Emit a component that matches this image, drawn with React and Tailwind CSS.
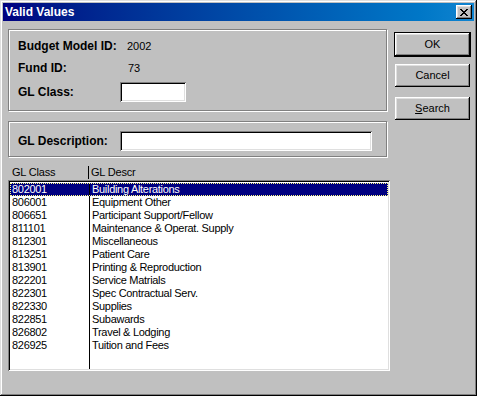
import React from 'react';

const rows = [
  ['802001', 'Building Alterations'],
  ['806001', 'Equipment Other'],
  ['806651', 'Participant Support/Fellow'],
  ['811101', 'Maintenance & Operat. Supply'],
  ['812301', 'Miscellaneous'],
  ['813251', 'Patient Care'],
  ['813901', 'Printing & Reproduction'],
  ['822201', 'Service Matrials'],
  ['822301', 'Spec Contractual Serv.'],
  ['822330', 'Supplies'],
  ['822851', 'Subawards'],
  ['826802', 'Travel & Lodging'],
  ['826925', 'Tuition and Fees'],
];

const raised =
  'bg-[#c0c0c0] shadow-[inset_-1px_-1px_#000,inset_1px_1px_#fff,inset_-2px_-2px_#808080,inset_2px_2px_#dfdfdf]';
const sunken =
  'shadow-[inset_1px_1px_#808080,inset_-1px_-1px_#fff,inset_2px_2px_#000,inset_-2px_-2px_#dfdfdf]';
const etched = 'border border-[#808080] shadow-[1px_1px_0_#fff,inset_1px_1px_0_#fff]';

const App = () => {
  return (
    <div className="w-[477px] h-[396px] bg-[#c0c0c0] p-[3px] text-black font-['Liberation_Sans',Arial,sans-serif] shadow-[inset_-1px_-1px_#000,inset_1px_1px_#dfdfdf,inset_-2px_-2px_#808080,inset_2px_2px_#fff]">
      {/* Title bar */}
      <div className="h-[18px] flex items-center justify-between pl-[2px] pr-[2px] bg-gradient-to-r from-[#000080] to-[#1084d0]">
        <span className="text-white font-bold text-[12px] leading-none">Valid Values</span>
        <div className={`w-[16px] h-[14px] flex items-center justify-center ${raised}`}>
          <svg width="8" height="7" viewBox="0 0 8 7" shapeRendering="crispEdges">
            <path
              fill="#000"
              d="M0 0h2v1h-2zM6 0h2v1h-2zM1 1h2v1h-2zM5 1h2v1h-2zM2 2h4v1h-4zM3 3h2v1h-2zM2 4h4v1h-4zM1 5h2v1h-2zM5 5h2v1h-2zM0 6h2v1h-2zM6 6h2v1h-2z"
            />
          </svg>
        </div>
      </div>

      <div className="flex pl-[5px]">
        {/* Left column */}
        <div className="w-[382px] pt-[8px]">
          <div className={`w-[379px] h-[82px] pl-[9px] pt-[8px] flex flex-col ${etched}`}>
            <div className="h-[16px] flex items-center">
              <span className="w-[102px] font-bold text-[12px]">Budget Model ID:</span>
              <span className="pl-[7px] text-[11px]">2002</span>
            </div>
            <div className="h-[16px] mt-[6px] flex items-center">
              <span className="w-[102px] font-bold text-[12px]">Fund ID:</span>
              <span className="pl-[8px] text-[11px]">73</span>
            </div>
            <div className="h-[20px] mt-[6px] flex items-center">
              <span className="w-[102px] font-bold text-[12px]">GL Class:</span>
              <div className={`w-[66px] h-[20px] bg-white ${sunken}`} />
            </div>
          </div>

          <div className={`w-[379px] h-[36px] mt-[10px] pl-[9px] pt-[9px] flex ${etched}`}>
            <div className="h-[20px] flex items-center">
              <span className="w-[102px] font-bold text-[12px]">GL Description:</span>
              <div className={`w-[252px] h-[20px] bg-white ${sunken}`} />
            </div>
          </div>

          {/* List header */}
          <div className="h-[16px] mt-[7px] flex items-center text-[11px] tracking-[-0.2px]">
            <span className="w-[80px] pl-[4px]">GL Class</span>
            <span className="w-px h-[13px] bg-black" />
            <span className="pl-[2px]">GL Descr</span>
          </div>

          {/* List */}
          <div className={`h-[191px] p-[2px] bg-white flex flex-col ${sunken}`}>
            <div className="flex-1 flex flex-col pt-[1px] bg-white text-[11px] leading-[13px] tracking-[-0.3px]">
              {rows.map(([code, descr], i) => (
                <div
                  key={code}
                  className={`h-[13px] flex ${
                    i === 0
                      ? 'bg-[#000080] text-white outline outline-1 outline-dotted outline-[#ffff80] -outline-offset-1'
                      : ''
                  }`}
                >
                  <span className="w-[80px] pl-[2px] border-r border-black">{code}</span>
                  <span className="pl-[2px] whitespace-nowrap">{descr}</span>
                </div>
              ))}
              <div className="flex-1 flex">
                <span className="w-[80px] border-r border-black" />
              </div>
            </div>
          </div>
        </div>

        {/* Buttons */}
        <div className="ml-[4px] pt-[11px] flex flex-col text-[11px]">
          <button className="w-[77px] h-[25px] border border-black p-0">
            <div className={`w-full h-full flex items-center justify-center ${raised}`}>OK</div>
          </button>
          <button className={`w-[75px] h-[23px] ml-[1px] mt-[7px] flex items-center justify-center ${raised}`}>
            Cancel
          </button>
          <button className={`w-[75px] h-[23px] ml-[1px] mt-[10px] flex items-center justify-center ${raised}`}>
            <span>
              <span className="underline">S</span>earch
            </span>
          </button>
        </div>
      </div>
    </div>
  );
};

export default App;
